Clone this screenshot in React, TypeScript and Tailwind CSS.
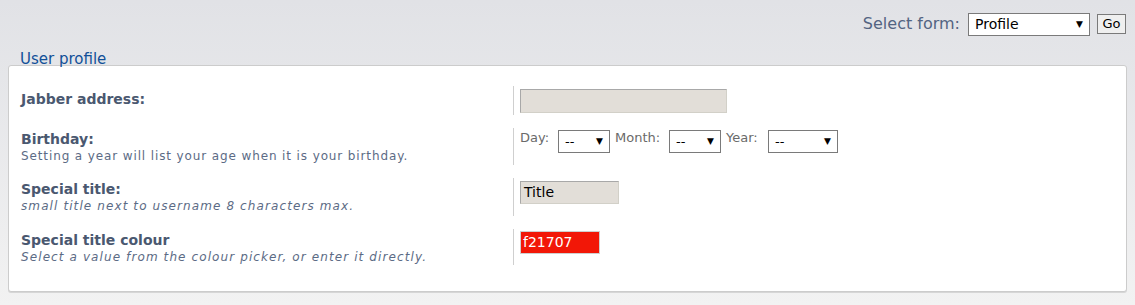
const font = 'font-["DejaVu_Sans",Verdana,sans-serif]';

function FakeSelect({ value, width, big }: { value: string; width: string; big?: boolean }) {
  return (
    <div
      className={`flex h-[23px] items-center justify-between border border-[#7a7a7a] bg-white pl-[6px] pr-[6px] text-black ${big ? 'text-[14px]' : 'text-[13px]'} ${width}`}
    >
      <span>{value}</span>
      <span className="text-[9px] leading-none">▼</span>
    </div>
  );
}

function Row({
  label,
  desc,
  italic,
  height,
  labelPad = 'pt-[3px]',
  valuePad = 'pt-[3px]',
  children,
}: {
  label: string;
  desc?: string;
  italic?: boolean;
  height: string;
  labelPad?: string;
  valuePad?: string;
  children: React.ReactNode;
}) {
  return (
    <div className={`flex ${height}`}>
      <div className={`w-[504px] shrink-0 pl-[12px] ${labelPad}`}>
        <div className="text-[14px] font-bold leading-[16px] text-[#4a5870]">{label}</div>
        {desc && (
          <div
            className={`text-[12px] leading-[18px] text-[#5c6b85] ${italic ? 'italic tracking-[1.1px]' : 'tracking-[0.88px]'}`}
          >
            {desc}
          </div>
        )}
      </div>
      <div className="w-px shrink-0 bg-[#cfcfcf]" />
      <div className={`flex items-start pl-[6px] ${valuePad}`}>{children}</div>
    </div>
  );
}

export default function App() {
  return (
    <div className={`h-[305px] w-full bg-gradient-to-b from-[#e1e2e6] to-[#f2f2f2] px-[8px] pt-[13px] ${font}`}>
      {/* form switcher */}
      <div className="flex h-[22px] items-center justify-end">
        <span className="mr-[8px] text-[16px] leading-[22px] text-[#536482]">Select form:</span>
        <FakeSelect value="Profile" width="w-[122px] h-[22px]" big />
        <div className="ml-[7px] flex h-[20px] w-[29px] items-center justify-center border border-[#7a7a7a] bg-[#efefef] text-[13px] text-black">
          Go
        </div>
        <div className="w-[1px]" />
      </div>

      <div className="relative z-10 mt-[15px] pl-[12px] text-[15px] leading-[18px] text-[#115098]">User profile</div>

      <div className="-mt-[3px] h-[227px] rounded-[3px] border border-[#cccccc] bg-white pt-[20px] shadow-[0_1px_0_#d6d6d6]">
        <Row label="Jabber address:" height="h-[29px]" labelPad="pt-[5px]">
          <div className="h-[24px] w-[207px] border border-t-[#a8a8a8] border-l-[#a8a8a8] border-r-[#d2d0c8] border-b-[#d2d0c8] bg-[#e2ded8]" />
        </Row>

        <div className="h-[13px]" />

        <Row
          label="Birthday:"
          desc="Setting a year will list your age when it is your birthday."
          height="h-[37px]"
          valuePad="pt-[2px]"
        >
          <div className="flex items-start text-[13px] leading-[16px] text-[#6a6a6a]">
            <span className="w-[38px]">Day:</span>
            <FakeSelect value="--" width="w-[52px]" />
            <span className="ml-[5px] w-[54px]">Month:</span>
            <FakeSelect value="--" width="w-[52px]" />
            <span className="ml-[5px] w-[42px]">Year:</span>
            <FakeSelect value="--" width="w-[70px]" />
          </div>
        </Row>

        <div className="h-[13px]" />

        <Row label="Special title:" desc="small title next to username 8 characters max." italic height="h-[38px]">
          <div className="flex h-[23px] w-[99px] items-center border border-t-[#a8a8a8] border-l-[#a8a8a8] border-r-[#d2d0c8] border-b-[#d2d0c8] bg-[#e2ded8] pl-[3px] text-[14px] text-black">
            Title
          </div>
        </Row>

        <div className="h-[13px]" />

        <Row
          label="Special title colour"
          desc="Select a value from the colour picker, or enter it directly."
          italic
          height="h-[36px]"
          valuePad="pt-[2px]"
        >
          <div className="flex h-[23px] w-[80px] items-center border border-[#cfcfcf] bg-[#f21707] pl-[2px] text-[14px] text-white">
            f21707
          </div>
        </Row>
      </div>
    </div>
  );
}
